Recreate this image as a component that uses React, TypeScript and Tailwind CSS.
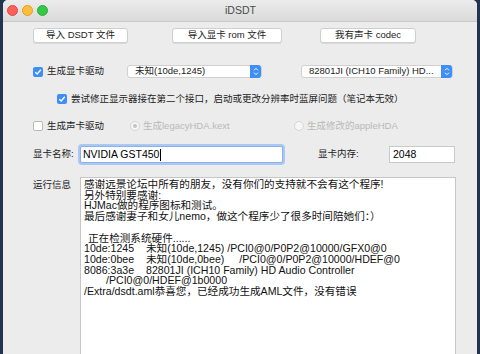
const FONT = '"Liberation Sans","Noto Sans CJK SC",sans-serif'

function Check({ on }: { on: boolean }) {
  return on ? (
    <span className="flex h-[10px] w-[10px] shrink-0 items-center justify-center rounded-[2px] bg-[#3d8ef7]">
      <svg width="8" height="8" viewBox="0 0 8 8">
        <path d="M1.3 4.2 3.2 6 6.8 1.8" fill="none" stroke="white" strokeWidth="1.4" />
      </svg>
    </span>
  ) : (
    <span className="h-[10px] w-[10px] shrink-0 rounded-[2px] border border-[#b8b8b8] bg-white" />
  )
}

function Radio({ on }: { on: boolean }) {
  return (
    <span className="flex h-[10px] w-[10px] shrink-0 items-center justify-center rounded-full border border-[#d6d6d6] bg-[#f6f6f6]">
      {on && <span className="h-[4px] w-[4px] rounded-full bg-[#c4c4c4]" />}
    </span>
  )
}

function Button({ label, w }: { label: string; w: string }) {
  return (
    <div
      className={`flex h-[15px] items-center justify-center rounded-[3px] border border-[#cfcfcf] bg-white text-[9.5px] text-[#222] shadow-[0_1px_0_rgba(0,0,0,0.08)] ${w}`}
    >
      {label}
    </div>
  )
}

function Select({ value, w }: { value: string; w: string }) {
  return (
    <div
      className={`flex h-[13px] items-center justify-between rounded-[3px] border border-[#d0d0d0] bg-white pl-[7px] text-[9.5px] text-[#222] ${w}`}
    >
      <span className="whitespace-nowrap">{value}</span>
      <span className="flex h-[13px] w-[11px] items-center justify-center rounded-r-[3px] bg-[#3d8ef7]">
        <svg width="6" height="9" viewBox="0 0 6 9">
          <path d="M1 3.3 3 1.3 5 3.3M1 5.7 3 7.7 5 5.7" fill="none" stroke="white" strokeWidth="1" />
        </svg>
      </span>
    </div>
  )
}

const LOG: { a?: string; b?: string; text?: string; pl?: string }[] = [
  { text: '感谢远景论坛中所有的朋友，没有你们的支持就不会有这个程序!' },
  { text: '另外特别要感谢:' },
  { text: 'HJMac做的程序图标和测试。' },
  { text: '最后感谢妻子和女儿nemo，做这个程序少了很多时间陪她们：）' },
  { text: ' ' },
  { text: '正在检测系统硬件......', pl: 'pl-[4px]' },
  { a: '10de:1245', b: '未知(10de,1245) /PCI0@0/P0P2@10000/GFX0@0' },
  { a: '10de:0bee', b: '未知(10de,0bee)' },
  { a: '8086:3a3e', b: '82801JI (ICH10 Family) HD Audio Controller' },
  { text: '/PCI0@0/HDEF@1b0000', pl: 'pl-[22px]' },
  { text: '/Extra/dsdt.aml恭喜您，已经成功生成AML文件，没有错误' },
]

export default function App() {
  return (
    <div
      className="flex h-[354px] w-[480px] overflow-hidden bg-[#243350] px-[3px]"
      style={{ fontFamily: FONT }}
    >
      <div className="flex flex-1 flex-col overflow-hidden rounded-t-[5px] bg-[#ececec]">
        {/* title bar */}
        <div className="relative flex h-[22px] shrink-0 items-center border-b border-[#c9c9c9] bg-gradient-to-b from-[#ececec] to-[#dadada] px-[4px]">
          <div className="flex gap-[4px]">
            <span className="h-[11px] w-[11px] rounded-full border border-[#e2463f] bg-[#fc605c]" />
            <span className="h-[11px] w-[11px] rounded-full border border-[#e1a116] bg-[#fdbc40]" />
            <span className="h-[11px] w-[11px] rounded-full border border-[#2dac2f] bg-[#34c84a]" />
          </div>
          <span className="flex-1 pr-[40px] text-center text-[10.5px] text-[#4a4a4a]">iDSDT</span>
        </div>

        <div className="flex flex-1 flex-col pl-[30px] text-[9.5px] text-[#222]">
          <div className="mt-[6px] flex">
            <Button label="导入 DSDT 文件" w="w-[95px]" />
            <div className="ml-[44px]">
              <Button label="导入显卡 rom 文件" w="w-[110px]" />
            </div>
            <div className="ml-[38px]">
              <Button label="我有声卡 codec" w="w-[96px]" />
            </div>
          </div>

          <div className="mt-[22px] flex h-[13px] items-center">
            <Check on />
            <span className="ml-[4px] w-[80px]">生成显卡驱动</span>
            <Select value="未知(10de,1245)" w="w-[135px]" />
            <div className="ml-[39px]">
              <Select value="82801JI (ICH10 Family) HD..." w="w-[152px]" />
            </div>
          </div>

          <div className="mt-[16px] flex h-[10px] items-center pl-[24px]">
            <Check on />
            <span className="ml-[4px]">尝试修正显示器接在第二个接口，启动或更改分辨率时蓝屏问题（笔记本无效）</span>
          </div>

          <div className="mt-[17px] flex h-[10px] items-center">
            <Check on={false} />
            <span className="ml-[4px] w-[83px]">生成声卡驱动</span>
            <Radio on />
            <span className="ml-[3px] w-[151px] text-[#b9b9b9]">生成legacyHDA.kext</span>
            <Radio on={false} />
            <span className="ml-[3px] text-[#b9b9b9]">生成修改的appleHDA</span>
          </div>

          <div className="mt-[15px] flex h-[17px] items-center">
            <span className="w-[47px]">显卡名称:</span>
            <div className="flex h-[17px] w-[203px] items-center rounded-[2px] border border-[#8ab1ec] bg-white pl-[2px] text-[10.5px] text-black shadow-[0_0_0_2px_#a9c8f3]">
              NVIDIA GST450
              <span className="ml-[1px] h-[12px] w-px bg-black" />
            </div>
            <span className="ml-[35px] w-[71px]">显卡内存:</span>
            <div className="flex h-[17px] w-[66px] items-center border border-[#c9c9c9] bg-white pl-[3px] text-[10.5px] text-black">
              2048
            </div>
          </div>

          <div className="mt-[14px] flex flex-1">
            <span className="w-[47px] pt-[1px]">运行信息</span>
            <div className="mr-[21px] flex-1 border border-b-0 border-[#c6c6c6] bg-white pl-[3px] pt-[1px] text-[10.6px] leading-[10.7px] text-[#111]">
              {LOG.map((l, i) =>
                l.text !== undefined ? (
                  <div key={i} className={`whitespace-pre ${l.pl ?? ''}`}>
                    {l.text}
                  </div>
                ) : (
                  <div key={i} className="flex whitespace-pre">
                    <span className="w-[62px]">{l.a}</span>
                    <span>{l.b}</span>
                    {i === 7 && <span className="ml-[15px]">/PCI0@0/P0P2@10000/HDEF@0</span>}
                  </div>
                ),
              )}
            </div>
          </div>
        </div>
      </div>
    </div>
  )
}
